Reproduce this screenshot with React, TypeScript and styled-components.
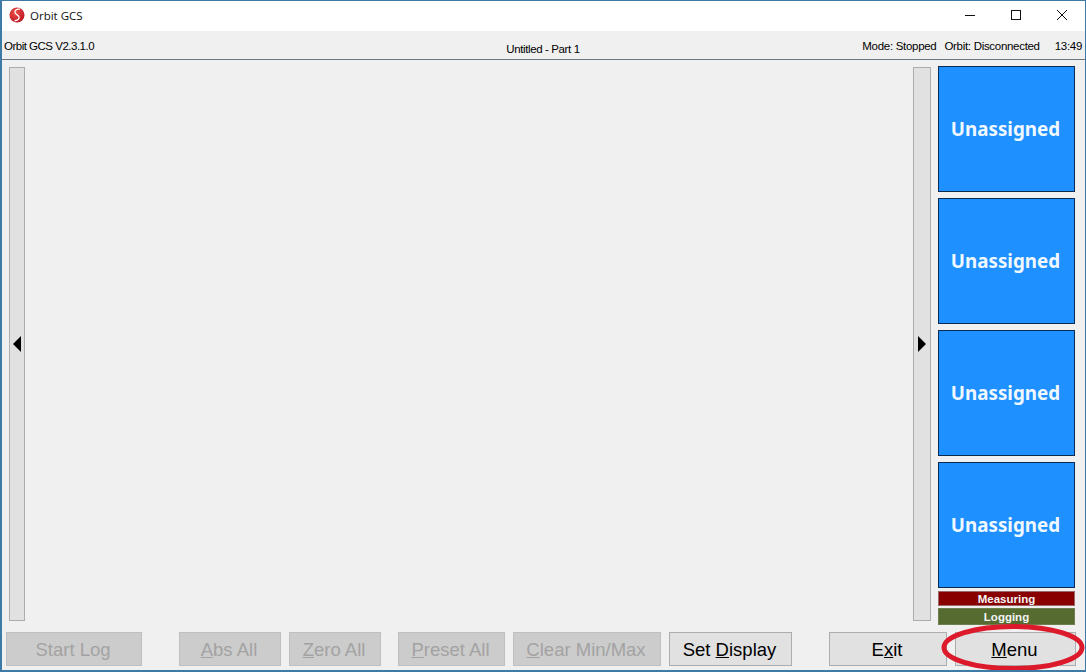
import styled, { createGlobalStyle } from "styled-components";

const GlobalStyle = createGlobalStyle`
  html, body {
    margin: 0;
    padding: 0;
    background: #ffffff;
    overflow: hidden;
  }
`;

const Window = styled.div`
  width: 1086px;
  height: 672px;
  box-sizing: border-box;
  position: relative;
  display: flex;
  flex-direction: column;
  background: #f0f0f0;
  border-style: solid;
  border-color: #3d7ba6;
  border-width: 1px 1px 2px 2px;
  font-family: "Liberation Sans", Arial, sans-serif;
  color: #000;
  overflow: hidden;
`;

const TitleBar = styled.div`
  height: 30px;
  flex: none;
  box-sizing: border-box;
  display: flex;
  align-items: center;
  background: #fff;
  padding: 0 0 2px 7px;
`;

const Logo = styled.svg`
  width: 16px;
  height: 16px;
  flex: none;
`;

const TitleText = styled.span`
  margin-left: 5px;
  font-family: "Open Sans", sans-serif;
  font-size: 11.5px;
  color: #111;
`;

const WindowControls = styled.div`
  margin-left: auto;
  display: flex;
  height: 100%;
`;

const ControlButton = styled.div`
  width: 46px;
  height: 100%;
  display: flex;
  align-items: center;
  justify-content: center;
  svg {
    width: 12px;
    height: 12px;
    stroke: #111;
    stroke-width: 1;
    fill: none;
  }
`;

const StatusStrip = styled.div`
  height: 29px;
  flex: none;
  box-sizing: border-box;
  display: grid;
  grid-template-columns: 1fr auto 1fr;
  align-items: center;
  padding: 2px 3px 0 2px;
  border-bottom: 1px solid #6d7780;
  font-size: 11.5px;
  letter-spacing: -0.38px;
`;

const Version = styled.span`
  letter-spacing: -0.5px;
`;

const StatusRight = styled.div`
  display: flex;
  justify-content: flex-end;
  gap: 8px;
  letter-spacing: -0.3px;
`;

const PartName = styled.span`
  padding-top: 5px;
`;

const Clock = styled.span`
  margin-left: 7px;
`;

const Body = styled.div`
  flex: 1;
  min-height: 0;
  display: flex;
  padding: 6px 10px 0 7px;
`;

const Scroller = styled.div<{ $right?: boolean }>`
  flex: none;
  box-sizing: border-box;
  width: ${(p) => (p.$right ? "18px" : "16px")};
  height: 554px;
  margin-top: 1px;
  background: #e1e1e1;
  border: 1px solid #adadad;
  display: flex;
  align-items: center;
  justify-content: center;
`;

const Arrow = styled.div<{ $right?: boolean }>`
  width: 0;
  height: 0;
  border-top: 8px solid transparent;
  border-bottom: 8px solid transparent;
  ${(p) =>
    p.$right ? "border-left: 8px solid #000;" : "border-right: 8px solid #000;"}
`;

const Canvas = styled.div`
  flex: 1;
`;

const SidePanel = styled.div`
  width: 137px;
  flex: none;
  margin-left: 7px;
  display: flex;
  flex-direction: column;
`;

const Tile = styled.div`
  height: 126px;
  box-sizing: border-box;
  margin-bottom: 6px;
  padding: 0 2px 0 0;
  background: #1e90ff;
  border: 1px solid #0a2a52;
  display: flex;
  align-items: center;
  justify-content: center;
  color: #f0f8ff;
  font-family: "Noto Sans", sans-serif;
  font-weight: 700;
  font-size: 18.8px;
`;

const Lamp = styled.div<{ $color: string; $height: number; $edge: string }>`
  height: ${(p) => p.$height}px;
  box-sizing: border-box;
  margin-top: 2px;
  background: ${(p) => p.$color};
  border: 1px solid ${(p) => p.$edge};
  display: flex;
  align-items: center;
  justify-content: center;
  color: #f4f4f4;
  font-weight: 700;
  font-size: 11.5px;
`;

const MeasuringLamp = styled(Lamp)`
  margin-top: -3px;
`;

const Footer = styled.div`
  height: 34px;
  flex: none;
  display: flex;
  padding: 0 0 4px 4px;
`;

const ActionButton = styled.div<{
  $width: number;
  $lead?: number;
  $disabled?: boolean;
}>`
  width: ${(p) => p.$width}px;
  margin-left: ${(p) => p.$lead ?? 8}px;
  box-sizing: border-box;
  padding: 1px 2px 0 0;
  display: flex;
  align-items: center;
  justify-content: center;
  font-size: 18.5px;
  white-space: pre;
  background: ${(p) => (p.$disabled ? "#cccccc" : "#e1e1e1")};
  border: 1px solid ${(p) => (p.$disabled ? "#bfbfbf" : "#adadad")};
  color: ${(p) => (p.$disabled ? "#a3a3a3" : "#000")};
`;

const Annotation = styled.svg`
  position: absolute;
  right: -1px;
  bottom: -2px;
  width: 146px;
  height: 50px;
  pointer-events: none;
`;

function App() {
  return (
    <>
      <GlobalStyle />
      <Window>
        <TitleBar>
          <Logo viewBox="0 0 16 16">
            <defs>
              <radialGradient id="ball" cx="0.4" cy="0.35" r="0.7">
                <stop offset="0" stopColor="#f0524a" />
                <stop offset="1" stopColor="#b81420" />
              </radialGradient>
            </defs>
            <circle cx="8" cy="8" r="7.5" fill="url(#ball)" />
            <path
              d="M11 2.2C7.5 1.8 5 3.6 6.2 6c1 2 4.2 2.2 3.9 4.6-.2 1.7-2 2.9-4.6 3.2"
              fill="none"
              stroke="#fff"
              strokeWidth="1.3"
            />
          </Logo>
          <TitleText>Orbit GCS</TitleText>
          <WindowControls>
            <ControlButton>
              <svg viewBox="0 0 12 12">
                <path d="M1 6.5h10" />
              </svg>
            </ControlButton>
            <ControlButton>
              <svg viewBox="0 0 12 12">
                <rect x="1.5" y="1.5" width="9" height="9" />
              </svg>
            </ControlButton>
            <ControlButton>
              <svg viewBox="0 0 12 12">
                <path d="M1 1l10 10M11 1L1 11" />
              </svg>
            </ControlButton>
          </WindowControls>
        </TitleBar>
        <StatusStrip>
          <Version>Orbit GCS V2.3.1.0</Version>
          <PartName>Untitled - Part 1</PartName>
          <StatusRight>
            <span>Mode: Stopped</span>
            <span>Orbit: Disconnected</span>
            <Clock>13:49</Clock>
          </StatusRight>
        </StatusStrip>
        <Body>
          <Scroller>
            <Arrow />
          </Scroller>
          <Canvas />
          <Scroller $right>
            <Arrow $right />
          </Scroller>
          <SidePanel>
            <Tile>Unassigned</Tile>
            <Tile>Unassigned</Tile>
            <Tile>Unassigned</Tile>
            <Tile>Unassigned</Tile>
            <MeasuringLamp $color="#880000" $edge="#9a6a6a" $height={15}>
              Measuring
            </MeasuringLamp>
            <Lamp $color="#556b2f" $edge="#6f8050" $height={17}>
              Logging
            </Lamp>
          </SidePanel>
        </Body>
        <Footer>
          <ActionButton $width={136} $lead={0} $disabled>
            Start Log
          </ActionButton>
          <ActionButton $width={102} $lead={37} $disabled>
            <u>A</u>bs All
          </ActionButton>
          <ActionButton $width={92} $disabled>
            <u>Z</u>ero All
          </ActionButton>
          <ActionButton $width={107} $lead={17} $disabled>
            <u>P</u>reset All
          </ActionButton>
          <ActionButton $width={148} $disabled>
            <u>C</u>lear Min/Max
          </ActionButton>
          <ActionButton $width={123}>
            Set <u>D</u>isplay
          </ActionButton>
          <ActionButton $width={118} $lead={37}>
            E<u>x</u>it
          </ActionButton>
          <ActionButton $width={121}>
            <u>M</u>enu
          </ActionButton>
        </Footer>
        <Annotation viewBox="0 0 146 50">
          <ellipse
            cx="73"
            cy="25.5"
            rx="69"
            ry="21"
            fill="none"
            stroke="#dc1a2c"
            strokeWidth="5"
          />
        </Annotation>
      </Window>
    </>
  );
}

export default App;
